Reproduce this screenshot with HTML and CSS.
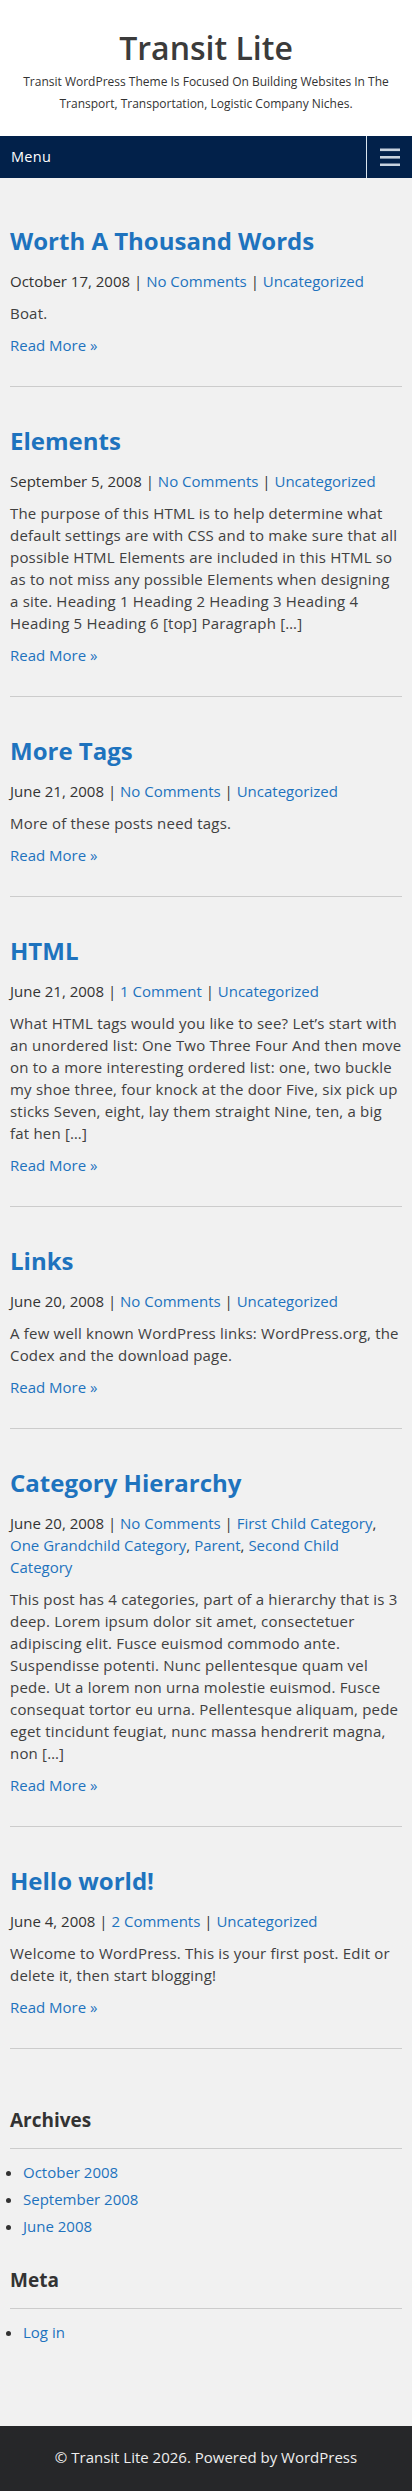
FILE: index.html
```html
<!DOCTYPE html>
<html lang="en">
<head>
<meta charset="utf-8">
<title>Transit Lite</title>
<link rel="stylesheet" href="styles.css">
</head>
<body>
<header class="site-header">
  <h1 class="site-title">Transit Lite</h1>
  <p class="site-desc">Transit WordPress Theme Is Focused On Building Websites In The Transport, Transportation, Logistic Company Niches.</p>
</header>
<nav class="main-nav">
  <span class="menu-label">Menu</span>
  <button class="menu-toggle" aria-label="Toggle menu">
    <svg width="20" height="18" viewBox="0 0 20 18"><rect x="0" y="0.5" width="20" height="2.6" /><rect x="0" y="8" width="20" height="2.6" /><rect x="0" y="15.5" width="20" height="2.6" /></svg>
  </button>
</nav>
<main class="content">
  <article class="post">
    <h2 class="post-title"><a href="#">Worth A Thousand Words</a></h2>
    <p class="post-meta"><span>October 17, 2008</span> <span class="sep">|</span> <a href="#">No Comments</a> <span class="sep">|</span> <a href="#">Uncategorized</a></p>
    <p class="excerpt">Boat.</p>
    <p class="read-more"><a href="#">Read More »</a></p>
  </article>
  <article class="post">
    <h2 class="post-title"><a href="#">Elements</a></h2>
    <p class="post-meta"><span>September 5, 2008</span> <span class="sep">|</span> <a href="#">No Comments</a> <span class="sep">|</span> <a href="#">Uncategorized</a></p>
    <p class="excerpt">The purpose of this HTML is to help determine what default settings are with CSS and to make sure that all possible HTML Elements are included in this HTML so as to not miss any possible Elements when designing a site. Heading 1 Heading 2 Heading 3 Heading 4 Heading 5 Heading 6 [top] Paragraph […]</p>
    <p class="read-more"><a href="#">Read More »</a></p>
  </article>
  <article class="post">
    <h2 class="post-title"><a href="#">More Tags</a></h2>
    <p class="post-meta"><span>June 21, 2008</span> <span class="sep">|</span> <a href="#">No Comments</a> <span class="sep">|</span> <a href="#">Uncategorized</a></p>
    <p class="excerpt">More of these posts need tags.</p>
    <p class="read-more"><a href="#">Read More »</a></p>
  </article>
  <article class="post">
    <h2 class="post-title"><a href="#">HTML</a></h2>
    <p class="post-meta"><span>June 21, 2008</span> <span class="sep">|</span> <a href="#">1 Comment</a> <span class="sep">|</span> <a href="#">Uncategorized</a></p>
    <p class="excerpt">What HTML tags would you like to see? Let’s start with an unordered list: One Two Three Four And then move on to a more interesting ordered list: one, two buckle my shoe three, four knock at the door Five, six pick up sticks Seven, eight, lay them straight Nine, ten, a big fat hen […]</p>
    <p class="read-more"><a href="#">Read More »</a></p>
  </article>
  <article class="post">
    <h2 class="post-title"><a href="#">Links</a></h2>
    <p class="post-meta"><span>June 20, 2008</span> <span class="sep">|</span> <a href="#">No Comments</a> <span class="sep">|</span> <a href="#">Uncategorized</a></p>
    <p class="excerpt">A few well known WordPress links: WordPress.org, the Codex and the download page.</p>
    <p class="read-more"><a href="#">Read More »</a></p>
  </article>
  <article class="post">
    <h2 class="post-title"><a href="#">Category Hierarchy</a></h2>
    <p class="post-meta"><span>June 20, 2008</span> <span class="sep">|</span> <a href="#">No Comments</a> <span class="sep">|</span> <a href="#">First Child Category</a>, <a href="#">One Grandchild Category</a>, <a href="#">Parent</a>, <a href="#">Second Child Category</a></p>
    <p class="excerpt">This post has 4 categories, part of a hierarchy that is 3 deep. Lorem ipsum dolor sit amet, consectetuer adipiscing elit. Fusce euismod commodo ante. Suspendisse potenti. Nunc pellentesque quam vel pede. Ut a lorem non urna molestie euismod. Fusce consequat tortor eu urna. Pellentesque aliquam, pede eget tincidunt feugiat, nunc massa hendrerit magna, non […]</p>
    <p class="read-more"><a href="#">Read More »</a></p>
  </article>
  <article class="post">
    <h2 class="post-title"><a href="#">Hello world!</a></h2>
    <p class="post-meta"><span>June 4, 2008</span> <span class="sep">|</span> <a href="#">2 Comments</a> <span class="sep">|</span> <a href="#">Uncategorized</a></p>
    <p class="excerpt">Welcome to WordPress. This is your first post. Edit or delete it, then start blogging!</p>
    <p class="read-more"><a href="#">Read More »</a></p>
  </article>

  <section class="widget widget-archives">
    <h3 class="widget-title">Archives</h3>
    <ul class="widget-list">
      <li><a href="#">October 2008</a></li>
      <li><a href="#">September 2008</a></li>
      <li><a href="#">June 2008</a></li>
    </ul>
  </section>
  <section class="widget widget-meta">
    <h3 class="widget-title">Meta</h3>
    <ul class="widget-list">
      <li><a href="#">Log in</a></li>
    </ul>
  </section>
</main>
<footer class="site-footer">
  <p>© Transit Lite 2026. Powered by WordPress</p>
</footer>
</body>
</html>
```
FILE: styles.css
```css
* { box-sizing: border-box; }
html, body { margin: 0; padding: 0; }
body {
  background: #f1f1f1;
  color: #404040;
  font-family: "Open Sans", "Noto Sans", sans-serif;
  font-size: 15px;
  line-height: 22px;
}
a { color: #1e73be; text-decoration: none; }

.site-header {
  background: #ffffff;
  text-align: center;
  padding: 28px 10px 21px;
}
.site-title {
  margin: 0;
  font-size: 32px;
  line-height: 40px;
  font-weight: 600;
  color: #3b3b3b;
}
.site-desc {
  margin: 3px 0 0;
  font-size: 12px;
  line-height: 22px;
  color: #333333;
}

.main-nav {
  background: #02214a;
  height: 42px;
  display: flex;
  align-items: stretch;
  justify-content: space-between;
}
.menu-label {
  color: #ffffff;
  font-size: 14.5px;
  line-height: 42px;
  padding-left: 11px;
  letter-spacing: 0.3px;
}
.menu-toggle {
  width: 46px;
  border: 0;
  border-left: 1px solid #d9e4ee;
  background: transparent;
  padding: 0;
  display: flex;
  align-items: center;
  justify-content: center;
  fill: #c7d2de;
}

.content {
  padding: 9px 10px 78px;
}
.post {
  padding: 39px 0 30px;
  border-bottom: 1px solid #cccccc;
}
.post-title {
  margin: 0 0 14px;
  font-size: 24px;
  line-height: 30px;
  font-weight: 700;
}
.post-title a { color: #1e73be; }
.post-meta {
  margin: 0 0 10px;
  color: #333333;
}
.excerpt {
  margin: 0 0 10px;
  letter-spacing: 0.2px;
}
.read-more {
  margin: 0;
}

.widget-archives { margin-top: 58px; }
.widget-meta { margin-top: 30px; }
.widget-title {
  margin: 0;
  font-size: 19px;
  line-height: 26px;
  font-weight: 700;
  color: #333333;
  padding-bottom: 15px;
  border-bottom: 1px solid #cccccc;
}
.widget-list {
  margin: 12px 0 0;
  padding-left: 13px;
  color: #333333;
}
.widget-list li {
  margin-bottom: 5px;
}

.site-footer {
  background: #262729;
  color: #eeeeee;
  text-align: center;
  padding: 20px 10px 23px;
}
.site-footer p {
  margin: 0;
  font-size: 15px;
  line-height: 22px;
}
```
